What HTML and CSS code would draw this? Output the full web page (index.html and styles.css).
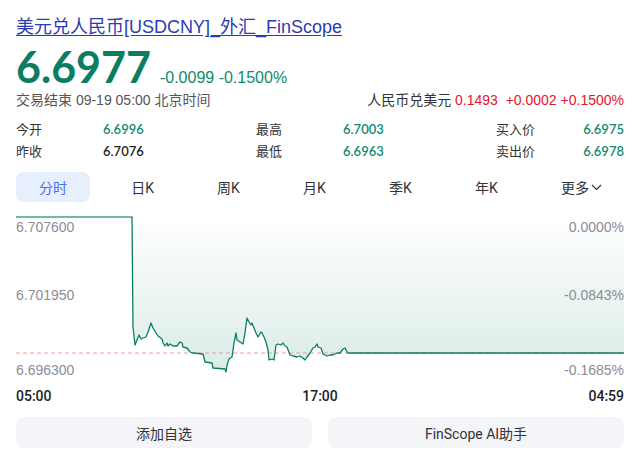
FILE: index.html
```html
<!DOCTYPE html>
<html lang="zh-CN">
<head>
<meta charset="utf-8">
<title>美元兑人民币</title>
<link rel="stylesheet" href="styles.css">
</head>
<body>
<div class="page">
  <a class="title" href="#">美元兑人民币[USDCNY]_外汇_FinScope</a>

  <div class="price-row">
    <span class="price">6.6977</span>
    <span class="change">-0.0099 -0.1500%</span>
  </div>

  <div class="sub-row">
    <span class="status">交易结束 09-19 05:00 北京时间</span>
    <span class="inverse"><span class="inv-label">人民币兑美元</span> <span class="inv-val">0.1493 &nbsp;+0.0002 +0.1500%</span></span>
  </div>

  <div class="stats">
    <span class="s-label">今开</span><span class="s-val up">6.6996</span>
    <span class="s-label">最高</span><span class="s-val up">6.7003</span>
    <span class="s-label">买入价</span><span class="s-val up right">6.6975</span>
    <span class="s-label">昨收</span><span class="s-val">6.7076</span>
    <span class="s-label">最低</span><span class="s-val up">6.6963</span>
    <span class="s-label">卖出价</span><span class="s-val up right">6.6978</span>
  </div>

  <div class="tabs">
    <span class="tab active">分时</span>
    <span class="tab">日K</span>
    <span class="tab">周K</span>
    <span class="tab">月K</span>
    <span class="tab">季K</span>
    <span class="tab">年K</span>
    <span class="tab">更多<svg class="chev" width="11" height="7" viewBox="0 0 11 7"><path d="M1 1 L5.5 5.5 L10 1" fill="none" stroke="#333" stroke-width="1.2"/></svg></span>
  </div>

  <svg class="chart" width="608" height="176" viewBox="0 0 608 176">
    <defs>
      <linearGradient id="fillg" x1="0" y1="7" x2="0" y2="162" gradientUnits="userSpaceOnUse">
        <stop offset="0" stop-color="#0b7d62" stop-opacity="0.0"/>
        <stop offset="1" stop-color="#0b7d62" stop-opacity="0.15"/>
      </linearGradient>
    </defs>
    <path class="area" d="M116,7 L117,117 L119,135 L121,130 L123,125 L125,129 L127,128 L130,127 L132,122 L135,113 L137,118 L140,123 L142,126 L146,129 L147,133 L149,136 L151,133 L152,136 L154,134 L157,136 L161,136 L164,132 L166,133 L167,137 L171,138 L174,142 L177,143 L187,144 L189,152 L196,153 L197,158 L209,159 L210,162 L211,155 L213,149 L216,147 L218,133 L220,123 L221,130 L224,132 L227,134 L229,123 L231,108 L233,112 L235,115 L236,113 L238,118 L240,123 L242,127 L245,122 L246,123 L248,127 L250,132 L252,140 L253,150 L256,149 L258,150 L260,135 L262,134 L265,135 L267,133 L269,136 L271,137 L274,145 L277,146 L281,147 L284,146 L287,148 L289,150 L291,147 L294,143 L297,138 L299,137 L301,134 L302,137 L305,138 L307,144 L311,146 L314,145 L317,145 L321,143 L324,143 L327,139 L329,138 L331,142 L332,143 L608,143 L608,7 Z" fill="url(#fillg)"/>
    <line x1="0" y1="143" x2="608" y2="143" stroke="#ee9a9a" stroke-width="1" stroke-dasharray="4 3"/>
    <line x1="0" y1="7" x2="116.5" y2="7" stroke="#72b8a7" stroke-width="2"/>
    <path class="line" d="M116,7 L117,117 L119,135 L121,130 L123,125 L125,129 L127,128 L130,127 L132,122 L135,113 L137,118 L140,123 L142,126 L146,129 L147,133 L149,136 L151,133 L152,136 L154,134 L157,136 L161,136 L164,132 L166,133 L167,137 L171,138 L174,142 L177,143 L187,144 L189,152 L196,153 L197,158 L209,159 L210,162 L211,155 L213,149 L216,147 L218,133 L220,123 L221,130 L224,132 L227,134 L229,123 L231,108 L233,112 L235,115 L236,113 L238,118 L240,123 L242,127 L245,122 L246,123 L248,127 L250,132 L252,140 L253,150 L256,149 L258,150 L260,135 L262,134 L265,135 L267,133 L269,136 L271,137 L274,145 L277,146 L281,147 L284,146 L287,148 L289,150 L291,147 L294,143 L297,138 L299,137 L301,134 L302,137 L305,138 L307,144 L311,146 L314,145 L317,145 L321,143 L324,143 L327,139 L329,138 L331,142 L332,143 L608,143" fill="none" stroke="#0b7d62" stroke-width="1.3" stroke-linejoin="round"/>
    <text class="axis" x="0" y="22">6.707600</text>
    <text class="axis" x="0" y="90">6.701950</text>
    <text class="axis" x="0" y="165">6.696300</text>
    <text class="axis" x="608" y="22" text-anchor="end">0.0000%</text>
    <text class="axis" x="608" y="90" text-anchor="end">-0.0843%</text>
    <text class="axis" x="608" y="165" text-anchor="end">-0.1685%</text>
  </svg>

  <div class="times">
    <span>05:00</span>
    <span>17:00</span>
    <span>04:59</span>
  </div>

  <div class="actions">
    <button class="btn">添加自选</button>
    <button class="btn">FinScope AI助手</button>
  </div>
</div>
</body>
</html>
```

FILE: styles.css
```css
html, body {
  margin: 0;
  padding: 0;
  background: #ffffff;
}

.page {
  width: 608px;
  padding: 15px 16px 0 16px;
  font-family: "Liberation Sans", "Noto Sans CJK SC", sans-serif;
  color: #333;
}

.title {
  display: block;
  font-size: 18px;
  line-height: 24px;
  color: #2b3cb2;
  text-decoration: underline;
  text-underline-offset: 2px;
}

.price-row {
  display: flex;
  align-items: baseline;
  gap: 9px;
  margin-top: 6px;
}

.price {
  font-family: Lato, "Liberation Sans", sans-serif;
  font-weight: 700;
  font-size: 43px;
  line-height: 43px;
  color: #0b7d62;
}

.change {
  font-size: 16px;
  color: #128a6d;
}

.sub-row {
  display: flex;
  justify-content: space-between;
  align-items: center;
  margin-top: 2px;
  font-size: 14px;
  line-height: 20px;
}

.status {
  color: #555;
}

.inv-label {
  color: #333;
}

.inv-val {
  color: #e3162f;
}

.stats {
  display: grid;
  grid-template-columns: 87px 153px 87px 153px 87px auto;
  margin-top: 8px;
  font-size: 13px;
  line-height: 22px;
}

.s-label {
  font-family: "Noto Sans CJK SC", sans-serif;
  color: #333;
}

.s-val {
  font-family: Lato, "Liberation Sans", sans-serif;
  font-weight: 600;
  color: #222;
}

.s-val.up {
  color: #128a6d;
}

.s-val.right {
  text-align: right;
}

.tabs {
  display: flex;
  justify-content: space-between;
  margin-top: 10px;
  font-family: Roboto, "Noto Sans CJK SC", sans-serif;
  font-size: 14px;
}

.tab {
  display: flex;
  align-items: center;
  height: 30px;
  padding: 0 22px;
  color: #333;
}

.tab.active {
  padding: 0 23px;
  background: #e7effd;
  border-radius: 8px;
  color: #4a6ef0;
}

.chev {
  margin-left: 2px;
}

.chart {
  display: block;
  margin-top: 8px;
}

.axis {
  font-family: "Liberation Sans", sans-serif;
  font-size: 14px;
  fill: #8a8d96;
}

.times {
  display: flex;
  justify-content: space-between;
  font-family: Roboto, sans-serif;
  font-weight: 500;
  font-size: 14px;
  line-height: 20px;
  color: #222;
}

.actions {
  display: flex;
  gap: 16px;
  margin-top: 11px;
}

.btn {
  flex: 1;
  height: 31px;
  border: none;
  border-radius: 8px;
  background: #f3f5f9;
  font-family: Roboto, "Noto Sans CJK SC", sans-serif;
  font-size: 14px;
  color: #333;
  padding: 0;
}
```
